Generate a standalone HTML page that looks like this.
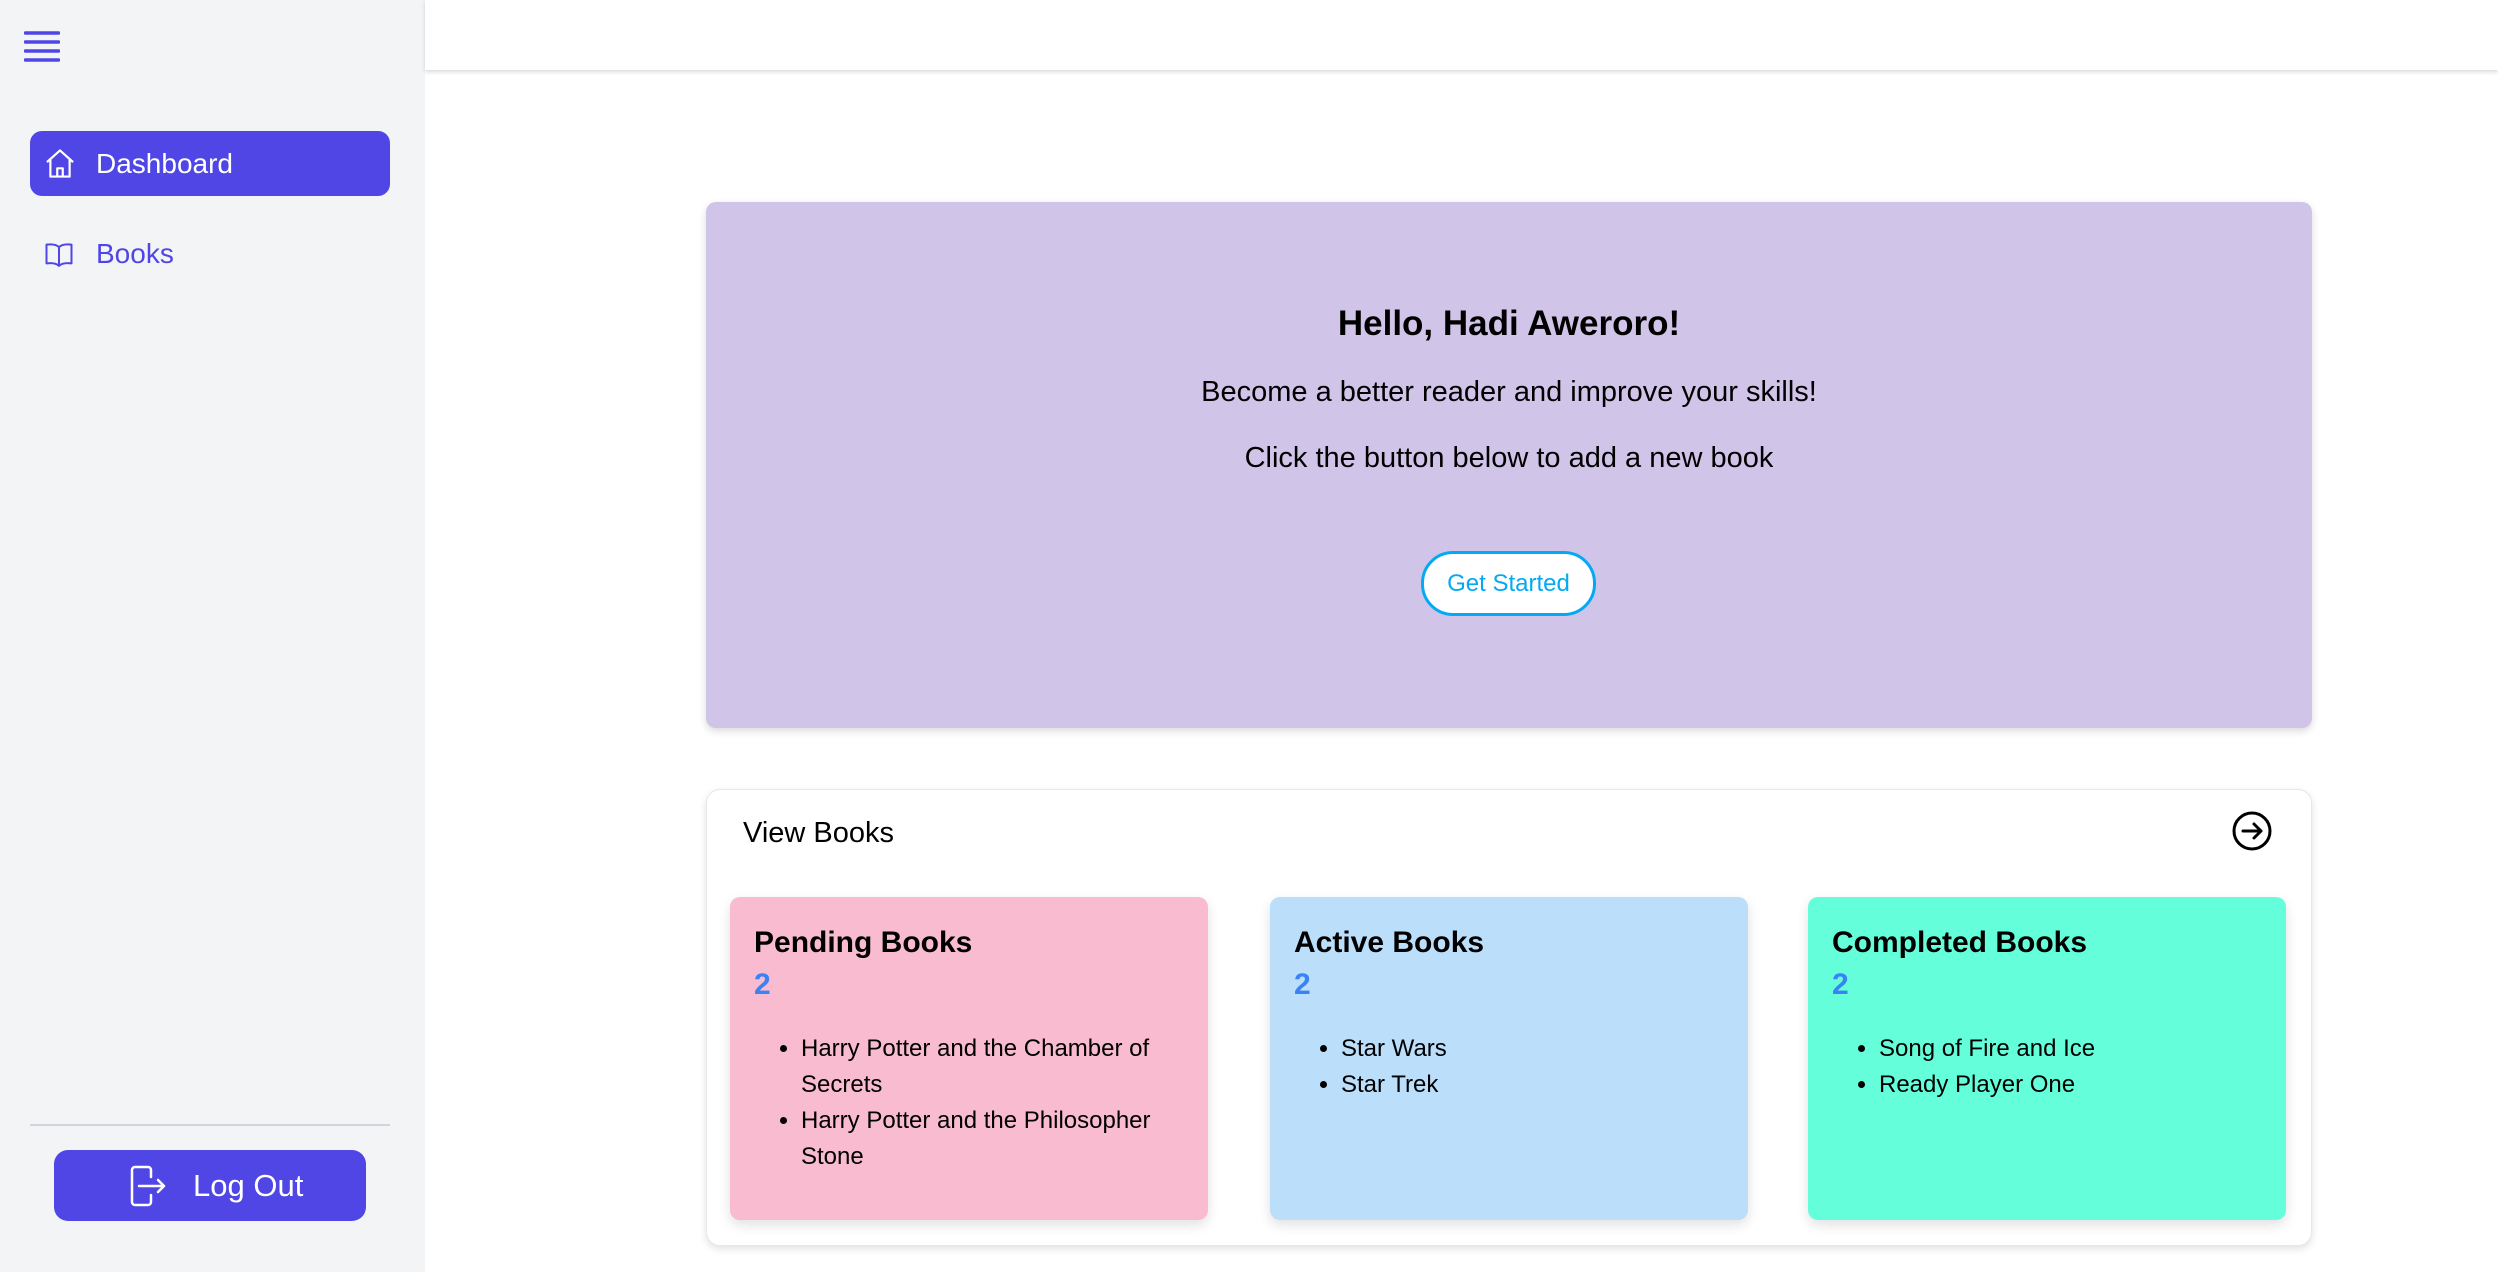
<!DOCTYPE html>
<html><head><meta charset="utf-8"><style>
*{margin:0;padding:0;box-sizing:border-box}
body{width:2498px;height:1272px;overflow:hidden;background:#fff;font-family:"Liberation Sans",Arial,sans-serif;position:relative}
.abs{position:absolute}
.side{left:0;top:0;width:425px;height:1272px;background:#f3f4f6}
.hdr{left:425px;top:0;width:2073px;height:70px;background:#fff;box-shadow:0 2px 4px rgba(0,0,0,.15)}
.dash{left:30px;top:131px;width:360px;height:65px;background:#4f46e5;border-radius:12px;color:#fff;font-size:28px}
.nav-t{position:absolute;left:66px;top:50%;transform:translateY(-50%)}
.card{background:#d1c4e9;left:706px;top:202px;width:1606px;height:526px;border-radius:10px;box-shadow:0 3px 8px rgba(0,0,0,.15);text-align:center}
.vb{left:706px;top:789px;width:1606px;height:457px;border-radius:14px;border:1px solid #e5e7eb;box-shadow:0 3px 8px rgba(0,0,0,.12);background:#fff}
.bc{top:897px;width:478px;height:323px;border-radius:10px;box-shadow:0 5px 12px rgba(0,0,0,.12)}
.bc h3{position:absolute;left:24px;top:29px;font-size:30px;font-weight:bold;color:#000}
.bc .n{position:absolute;left:24px;top:71px;font-size:30px;font-weight:bold;color:#3b82f6}
.bc ul{position:absolute;left:71px;top:134px;width:390px;font-size:24px;line-height:36px;color:#000}
</style></head><body>
<div class="abs side"></div>
<div class="abs hdr"></div>
<svg class="abs" style="left:24px;top:31px" width="36" height="32" viewBox="0 0 36 32"><g stroke="#4f46e5" stroke-width="3.5" stroke-linecap="round"><path d="M1.5 2h33M1.5 11h33M1.5 20h33M1.5 29h33"/></g></svg>
<div class="abs dash">
<svg style="position:absolute;left:13px;top:16px" width="34" height="33" viewBox="0 0 24 24" fill="none" stroke="#fff" stroke-width="1.6" stroke-linejoin="round"><path d="M2.5 11L12 2.5 21.5 11M5 9v12.5h14V9M10 21.5v-6h4v6"/></svg>
<span class="nav-t">Dashboard</span></div>
<div class="abs" style="left:30px;top:229px;width:360px;height:50px;color:#4f46e5;font-size:28px">
<svg style="position:absolute;left:13px;top:10px" width="32" height="30" viewBox="0 0 24 24" fill="none" stroke="#4f46e5" stroke-width="1.6" stroke-linejoin="round"><path d="M12 6.5C10 4.5 6 4 2 4.5v15c4-.5 8 0 10 2 2-2 6-2.5 10-2v-15c-4-.5-8 0-10 2zM12 6.5v15"/></svg>
<span class="nav-t">Books</span></div>
<div class="abs" style="left:30px;top:1124px;width:360px;height:2px;background:#d1d5db"></div>
<div class="abs" style="left:54px;top:1150px;width:312px;height:71px;background:#4f46e5;border-radius:14px;color:#fff;font-size:31px">
<svg style="position:absolute;left:75px;top:15px" width="38" height="42" viewBox="0 0 38 42" fill="none" stroke="#fff" stroke-width="2.5" stroke-linecap="round" stroke-linejoin="round"><path d="M22 12V5a3 3 0 0 0-3-3H6a3 3 0 0 0-3 3v32a3 3 0 0 0 3 3h13a3 3 0 0 0 3-3v-7M10 21h25M29 15l6 6-6 6"/></svg>
<span style="position:absolute;left:139px;top:50%;transform:translateY(-50%)">Log Out</span></div>
<div class="abs card">
<div style="position:absolute;left:0;width:100%;font-size:35px;font-weight:bold;top:102px">Hello, Hadi Aweroro!</div>
<div style="position:absolute;top:174px;width:100%;font-size:29px">Become a better reader and improve your skills!</div>
<div style="position:absolute;top:240px;width:100%;font-size:29px">Click the button below to add a new book</div>
<div style="position:absolute;left:715px;top:349px;width:175px;height:65px;border:3px solid #03a9f4;border-radius:32px;background:#fff;color:#03a9f4;font-size:24px;line-height:60px">Get Started</div>
</div>
<div class="abs vb">
<div style="position:absolute;left:36px;top:27px;font-size:29px;color:#000">View Books</div>
<svg style="position:absolute;left:1525px;top:21px" width="40" height="40" viewBox="0 0 40 40" fill="none" stroke="#000" stroke-width="3" stroke-linecap="round" stroke-linejoin="round"><circle cx="20" cy="20" r="18"/><path d="M11 20h18M22 13l7 7-7 7"/></svg>
</div>
<div class="abs bc" style="left:730px;background:#f8bbd0"><h3>Pending Books</h3><div class="n">2</div><ul><li>Harry Potter and the Chamber of Secrets</li><li>Harry Potter and the Philosopher Stone</li></ul></div>
<div class="abs bc" style="left:1270px;background:#bbdefb"><h3>Active Books</h3><div class="n">2</div><ul><li>Star Wars</li><li>Star Trek</li></ul></div>
<div class="abs bc" style="left:1808px;background:#64ffda"><h3>Completed Books</h3><div class="n">2</div><ul><li>Song of Fire and Ice</li><li>Ready Player One</li></ul></div>
</body></html>
